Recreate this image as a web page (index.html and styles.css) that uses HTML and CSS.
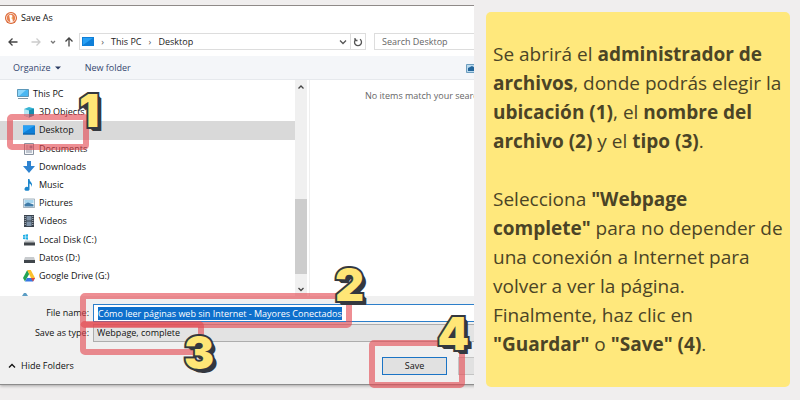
FILE: index.html
```
<!DOCTYPE html>
<html lang="es">
<head>
    <meta charset="UTF-8">
    <meta name="viewport" content="width=device-width, initial-scale=1.0">
    <title>Guardar una página web</title>
    <link rel="stylesheet" href="styles.css">
</head>
<body>
    <main class="stage">
        <section class="dialog" lang="en">
            <div class="window">
                <header class="title-bar">
                    <svg class="app-icon" viewBox="0 0 12 12">
                        <circle cx="6" cy="6" r="6" fill="#d9622f"/>
                        <circle cx="6" cy="6" r="4.6" fill="#e8804f" stroke="#fff" stroke-width=".7"/>
                        <path d="M4.2 3.2Q6 2 7.4 3.8L7.2 6 8 9.8 5.4 10.2Z" fill="#fff"/>
                        <path d="M6.4 5.6l2 .3-1.8.8z" fill="#f2b52c"/>
                    </svg>
                    <h1>Save As</h1>
                </header>

                <!-- Navigation -->
                <div class="nav-bar">
                    <button type="button" aria-label="Back"><svg viewBox="0 0 10 10" class="line"><path d="M9.5 5H1M4.5 1.5L1 5l3.5 3.5"/></svg></button>
                    <button type="button" aria-label="Forward" class="forward"><svg viewBox="0 0 10 10" class="line"><path d="M.5 5H9M5.5 1.5L9 5 5.500 8.500"/></svg></button>
                    <button type="button" aria-label="Recent" class="recent"><svg viewBox="0 0 10 10" class="line"><path d="M3 4l2 2 2-2"/></svg></button>
                    <button type="button" aria-label="Up" class="up"><svg viewBox="0 0 10 10" class="line"><path d="M5 9.500V1M1.500 4.500L5 1l3.500 3.500"/></svg></button>
                    <div class="address">
                        <svg class="icon" viewBox="0 0 12 12"><path d="M0 1h12v9H0z" fill="#0f7fd8"/><path d="M1 2h10L1 9z" fill="#28a0f4"/></svg>
                        <span class="sep">›</span>
                        <a href="#">This PC</a>
                        <span class="sep">›</span>
                        <a href="#">Desktop</a>
                        <button type="button" aria-label="History" class="history"><svg viewBox="0 0 10 10" class="line"><path d="M2 3.500l3 3 3-3"/></svg></button>
                        <button type="button" aria-label="Refresh" class="refresh"><svg viewBox="0 0 10 10" class="line"><path d="M3 2.300A3.500 3.500 0 1 0 7 2.300M2 1v2.500h2.500"/></svg></button>
                    </div>
                    <input type="search" class="search" placeholder="Search Desktop" aria-label="Search Desktop">
                </div>

                <div class="toolbar">
                    <button type="button" class="organize">Organize <svg viewBox="0 0 6 4"><path d="M0 .5h6L3 3.500z" fill="#2b3c63"/></svg></button>
                    <button type="button">New folder</button>
                    <button type="button" class="view" aria-label="View"><svg class="icon" viewBox="0 0 12 12"><path d="M.5 2.500h11v8H.5z" fill="#b9d9ee" stroke="#6d9dbe"/><path d="M2 6l4-2 5 3v2H2z" fill="#23659a"/></svg></button>
                </div>

                <!-- Folder tree and file list -->
                <div class="browser">
                    <div class="tree">
                        <ul>
                            <li class="root"><svg class="icon" viewBox="0 0 12 12"><path d="M.5 1.500h11v7H.5z" fill="#49b7f2" stroke="#4a86a8" stroke-width=".8"/><path d="M1 2h8L2 8H1z" fill="#8bd6fb"/><path d="M1 10.500h10" stroke="#8196a3"/></svg>This PC</li>
                            <li><svg class="icon" viewBox="0 0 12 12"><path d="M1 3l5-2 5 1.500v7L6 11.500 1 9.500z" fill="#36b3d3"/><path d="M1 3l5 1.500v7l-5-2z" fill="#b4e8f3"/><path d="M6 4.500l5-2v7l-5 2z" fill="#168cb0"/></svg>3D Objects</li>
                            <li class="selected"><svg class="icon" viewBox="0 0 12 12"><path d="M0 1.500h12v9H0z" fill="#0f7fd8"/><path d="M0 1.500h12L0 9z" fill="#28a0f4"/><path d="M0 9.500h12v1H0z" fill="#155f9d"/></svg>Desktop<span class="mark mark-1"><b>1</b></span></li>
                            <li><svg class="icon" viewBox="0 0 12 12"><path d="M1.500.5h9v11h-9z" fill="#f4f6f8" stroke="#8993a0"/><path d="M3 3h2.500M3 5h2.500M3 7h6M3 9h6" stroke="#8a94a5"/><path d="M6.500 2.500h3v3h-3z" fill="#718ba8"/></svg>Documents</li>
                            <li><svg class="icon" viewBox="0 0 12 12"><path d="M4 0h4v5h4l-6 7-6-7h4z" fill="#2e83d0"/></svg>Downloads</li>
                            <li><svg class="icon" viewBox="0 0 12 12"><path d="M5 0h1.500C6.500 3 10.500 3.500 8.500 8 8.500 5.500 7.500 5 6.500 4.500V9.500A2.500 2 0 1 1 5 8z" fill="#1c86cc"/></svg>Music</li>
                            <li><svg class="icon" viewBox="0 0 12 12"><path d="M.4 2h11.200v8.500H.4z" fill="#eef6fb" stroke="#8b9eac" stroke-width=".8"/><path d="M1.500 3h9v3h-9z" fill="#a6d5ee"/><path d="M1.500 9.500V7L5 5.500l5.500 2v2z" fill="#3f7ba8"/></svg>Pictures</li>
                            <li><svg class="icon" viewBox="0 0 12 12"><path d="M1 0h10v12H1z" fill="#39424d"/><path d="M3.500 1h5v4.500h-5zM3.500 6.500h5V11h-5z" fill="#7f93a9"/><path d="M2.200 1v10M9.800 1v10" stroke="#c5ccd3" stroke-dasharray="1 1"/></svg>Videos</li>
                            <li><svg class="icon" viewBox="0 0 12 12"><path d="M0 1l2-.3v2H0zM2.500.6L5 .2v2.500H2.500zM0 3.200h2v2L0 5zM2.500 3.200H5v2.500l-2.500-.4z" fill="#20aee5"/><path d="M2 6.500h9l1 2.500H1z" fill="#bfc3c6"/><path d="M1 8.500h11v3H1z" fill="#40464b"/></svg>Local Disk (C:)</li>
                            <li><svg class="icon" viewBox="0 0 12 12"><path d="M2 5h9l1 3H1z" fill="#c8cbce"/><path d="M1 8h11v3H1z" fill="#40464b"/></svg>Datos (D:)</li>
                            <li><svg class="icon" viewBox="0 0 12 12"><path d="M4.200 0L0 8l2 3.500L6.200 4z" fill="#23a455"/><path d="M4.200 0h3.600L12 8H8z" fill="#fbc02d"/><path d="M4 8h8l-2 3.500H2z" fill="#3577e5"/><path d="M12 8l-2 3.500L8 8z" fill="#e5483a"/></svg>Google Drive (G:)</li>
                        </ul>
                        <svg class="network" viewBox="0 0 12 4"><path d="M3 4l2-3h2l2 3z" fill="#5c9dc4"/></svg>
                    </div>
                    <div class="scrollbar">
                        <svg viewBox="0 0 10 10" class="line"><path d="M2.500 6.500L5 4l2.500 2.500"/></svg>
                        <div class="thumb"></div>
                        <svg viewBox="0 0 10 10" class="line"><path d="M2.500 4L5 6.500 7.500 4"/></svg>
                    </div>
                    <p class="empty">No items match your search.</p>
                </div>

                <form class="footer">
                    <div class="field">
                        <label for="file-name">File name:</label>
                        <input type="text" id="file-name" value="Cómo leer páginas web sin Internet - Mayores Conectados">
                        <span class="mark mark-2"><b>2</b></span>
                    </div>
                    <div class="field">
                        <label for="file-type">Save as type:</label>
                        <select id="file-type"><option>Webpage, complete</option></select>
                        <span class="mark mark-3"><b>3</b></span>
                    </div>
                    <div class="actions">
                        <button type="button" class="hide-folders"><svg viewBox="0 0 10 10" class="line"><path d="M2 6.500l3-3 3 3"/></svg>Hide Folders</button>
                        <div class="save-wrap">
                            <button type="button" class="btn btn-default">Save</button>
                            <span class="mark mark-4"><b>4</b></span>
                        </div>
                        <button type="button" class="btn" aria-label="Cancel"></button>
                    </div>
                </form>
            </div>
        </section>

        <article class="note">
            <p>Se abrirá el <strong>administrador de archivos</strong>, donde podrás elegir la <strong>ubicación (1)</strong>, el <strong>nombre del archivo (2)</strong> y el <strong>tipo (3)</strong>.</p>
            <p>Selecciona <strong>"Webpage complete"</strong> para no depender de una conexión a Internet para volver a ver la página.<br>Finalmente, haz clic en <strong>"Guardar"</strong> o <strong>"Save" (4)</strong>.</p>
        </article>
    </main>

    <script>
        // the proposed file name starts selected
        const fileName = document.getElementById('file-name');
        fileName.focus();
        fileName.select();
    </script>
</body>
</html>
```
FILE: styles.css
```
* {
    margin: 0;
    padding: 0;
    box-sizing: border-box;
}

body {
    background-color: #f0eeee;
    font-family: 'Open Sans', 'Noto Sans', sans-serif;
}

button, input, select {
    font: inherit;
    color: inherit;
    border: none;
    border-radius: 0;
    background: none;
    outline: none;
}

a {
    color: inherit;
    text-decoration: none;
}

svg {
    display: block;
    flex: none;
}

.line {
    width: 10px;
    height: 10px;
    fill: none;
    stroke: currentColor;
    stroke-width: 1.3;
}

.icon {
    width: 12px;
    height: 12px;
}

.stage {
    display: flex;
    align-items: flex-start;
}

/* Dialog */
.dialog {
    flex: 1;
    min-width: 0;
    margin-top: 5px;
    padding-bottom: 4px;
    overflow: clip;
    font-size: 9px;
    line-height: 12px;
    color: #111;
}

/* runs past the visible edge */
.window {
    margin-right: -49px;
    background-color: #fff;
    border-top: 1px solid #8f8a88;
    border-bottom: 1px solid #8c8c8c;
    box-shadow: 0 1px 3px rgba(0,0,0,0.3);
}

.title-bar {
    display: flex;
    align-items: center;
    gap: 4px;
    height: 27px;
    padding: 0 5px 4px;
}

.title-bar h1 {
    font-size: 9px;
    font-weight: normal;
}

.app-icon {
    width: 12px;
    height: 12px;
}

.nav-bar {
    display: flex;
    align-items: center;
    height: 17px;
    padding-left: 8px;
    color: #444;
}

.forward {
    margin-left: 13px;
    color: #ccc;
}

.recent {
    margin-left: 7px;
    color: #777;
}

.up {
    margin-left: 6px;
}

.address {
    flex: 1;
    display: flex;
    align-items: center;
    align-self: stretch;
    margin-left: 5px;
    padding-left: 2px;
    border: 1px solid #ddd;
    color: #222;
}

.sep {
    width: 17px;
    text-align: center;
    color: #555;
}

.history {
    margin-left: auto;
    margin-right: 2px;
    color: #555;
}

.refresh {
    align-self: stretch;
    padding: 0 2px;
    border-left: 1px solid #ddd;
    color: #555;
}

.search {
    width: 149px;
    height: 17px;
    margin-left: 8px;
    padding-left: 7px;
    border: 1px solid #ddd;
}

.search::placeholder {
    color: #666;
}

.toolbar {
    display: flex;
    align-items: center;
    gap: 24px;
    height: 24px;
    margin-top: 6px;
    padding: 0 45px 0 13px;
    background-color: #f4f6f9;
    border-bottom: 1px solid #e6e9ed;
    color: #35466f;
}

.organize {
    display: flex;
    align-items: center;
    gap: 4px;
}

.organize svg {
    width: 6px;
    height: 4px;
}

.view {
    margin-left: auto;
}

.browser {
    display: flex;
    height: 216px;
}

.tree {
    display: flex;
    flex-direction: column;
    justify-content: space-between;
    width: 295px;
    padding-top: 5px;
}

.tree ul {
    display: flex;
    flex-direction: column;
    height: 200px;
    list-style: none;
}

.tree li {
    flex: 1;
    display: flex;
    align-items: center;
    gap: 4px;
    padding-left: 23px;
}

.tree .root {
    padding-left: 17px;
}

.tree .selected {
    position: relative;
    background-color: #d9d9d9;
}

.network {
    width: 12px;
    height: 4px;
    margin-left: 19px;
}

.scrollbar {
    display: flex;
    flex-direction: column;
    align-items: center;
    justify-content: space-between;
    width: 12px;
    padding: 2px 0;
    background-color: #f0f0f0;
    color: #444;
}

.thumb {
    width: 100%;
    height: 75px;
    margin-top: auto;
    margin-bottom: 10px;
    background-color: #cdcdcd;
}

.empty {
    flex: 1;
    margin-left: 2px;
    padding: 10px 0 0 55px;
    border-left: 1px solid #eee;
    white-space: nowrap;
    color: #666;
}

/* File name, type and buttons */
.footer {
    display: flex;
    flex-direction: column;
    gap: 2px;
    padding: 8px 0 9px;
    background-color: #f0f0f0;
}

.field {
    position: relative;
    display: flex;
    align-items: center;
    gap: 4px;
}

.field label {
    width: 89px;
    text-align: right;
}

.field input, .field select {
    flex: 1;
    height: 18px;
    border: 1px solid #adadad;
}

.field input {
    padding-left: 4px;
    background-color: #fff;
    border-color: #2d7fca;
}

.field input::selection {
    background-color: #0f70cc;
    color: #fff;
}

.field select {
    appearance: none;
    padding-left: 3px;
    background-color: #e3e3e3;
}

.actions {
    display: flex;
    align-items: center;
    gap: 11px;
    margin-top: 13px;
}

.hide-folders {
    display: flex;
    align-items: center;
    gap: 4px;
    padding-left: 7px;
}

.save-wrap {
    position: relative;
    margin-left: auto;
}

.btn {
    display: block;
    width: 65px;
    height: 18px;
    background-color: #e1e1e1;
    border: 1px solid #c4c4c4;
}

.btn-default {
    border: 1px solid #1b74c5;
}

/* Numbered red frames */
.mark {
    position: absolute;
    z-index: 1;
    border: 6px solid rgba(228,72,80,0.62);
    border-radius: 5px;
    pointer-events: none;
}

.mark b {
    position: absolute;
    font-family: Inter, sans-serif;
    font-size: 45px;
    font-weight: 900;
    line-height: 44px;
    color: #ffe676;
    -webkit-text-stroke: 4px #34383f;
    paint-order: stroke fill;
    text-shadow: 1px 1px #34383f, 2px 2px #34383f, 3px 3px #34383f, 4px 4px #34383f;
}

.mark-1 {
    left: 7px;
    top: -7px;
    width: 82px;
    height: 36px;
}

.mark-1 b {
    left: 66px;
    top: -31px;
}

.mark-2 {
    left: 80px;
    top: -11px;
    width: 272px;
    height: 35px;
}

.mark-2 b {
    right: -18px;
    top: -36px;
}

.mark-3 {
    left: 80px;
    top: -3px;
    width: 124px;
    height: 34px;
}

.mark-3 b {
    right: -16px;
    top: 4px;
}

.mark-4 {
    left: -13px;
    top: -17px;
    width: 96px;
    height: 48px;
}

.mark-4 b {
    right: -10px;
    top: -34px;
}

/* Explanation card */
.note {
    flex: 0 0 38%;
    margin: 12px 10px 12px 12px;
    padding: 28px 4px 28px 7px;
    background-color: #ffe87c;
    border-radius: 5px;
    font-size: 19px;
    line-height: 29px;
    color: #4b4426;
}

.note p + p {
    margin-top: 29px;
}
```
